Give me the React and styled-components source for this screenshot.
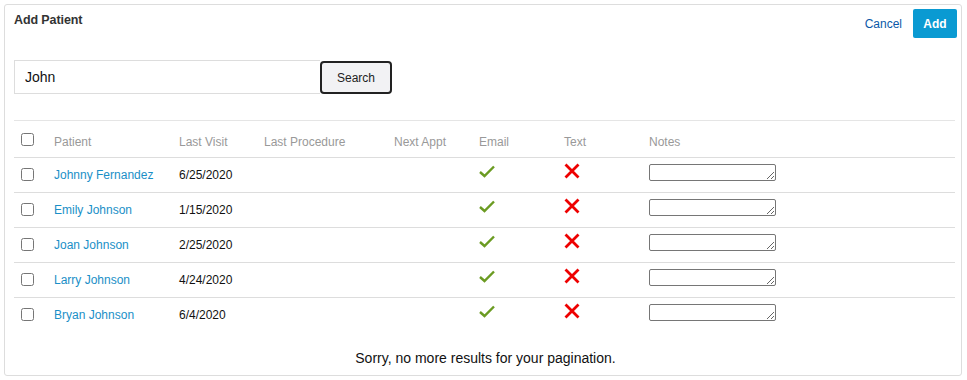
import styled, { createGlobalStyle } from 'styled-components';

const GlobalStyle = createGlobalStyle`
  html, body {
    margin: 0;
    padding: 0;
    background: #ffffff;
    font-family: "Liberation Sans", Arial, sans-serif;
  }
`;

const Page = styled.div`
  padding: 4px 5px 4px 4px;
`;

const Panel = styled.div`
  border: 1px solid #dddddd;
  border-radius: 3px;
  height: 372px;
  box-sizing: border-box;
  padding: 4px 4px 0 9px;
  display: flex;
  flex-direction: column;
`;

const Header = styled.div`
  display: flex;
  justify-content: space-between;
  align-items: flex-start;
`;

const Title = styled.h2`
  margin: 4px 0 0;
  font-size: 12.5px;
  font-weight: bold;
  color: #333333;
  letter-spacing: -0.1px;
`;

const Actions = styled.div`
  display: flex;
  align-items: center;
  gap: 11px;
`;

const CancelLink = styled.a`
  font-size: 12px;
  color: #0a58a8;
  cursor: pointer;
`;

const AddButton = styled.button`
  width: 44px;
  height: 29px;
  border: none;
  border-radius: 2px;
  background: #0a9ad2;
  color: #ffffff;
  font-family: inherit;
  font-size: 12px;
  font-weight: bold;
`;

const SearchRow = styled.div`
  display: flex;
  margin-top: 22px;
`;

const SearchInput = styled.input`
  width: 306px;
  height: 34px;
  box-sizing: border-box;
  border: 1px solid #dddddd;
  border-right: none;
  padding: 0 10px;
  font-family: inherit;
  font-size: 14px;
  color: #111111;
  outline: none;
`;

const SearchButton = styled.button`
  width: 72px;
  height: 33px;
  box-sizing: border-box;
  border: 2px solid #222222;
  border-radius: 4px;
  background: #f2f2f4;
  font-family: inherit;
  font-size: 12px;
  color: #222222;
  margin-top: 1px;
`;

const Table = styled.table`
  margin-top: 26px;
  width: 941px;
  border-collapse: collapse;
  table-layout: fixed;
  font-size: 12px;
`;

const HeadCell = styled.th`
  box-sizing: border-box;
  height: 37px;
  padding: 5px 0 0 7px;
  text-align: left;
  font-weight: normal;
  color: #999999;
  border-top: 1px solid #e5e5e5;
  border-bottom: 1px solid #dddddd;
  width: ${p => (p.$w ? `${p.$w}px` : 'auto')};
`;

const Row = styled.tr`
  & + & td {
    border-top: 1px solid #dddddd;
  }
`;

const Cell = styled.td`
  height: 34px;
  padding: 0 0 0 7px;
  color: #111111;
  vertical-align: middle;
`;

const Check = styled.input.attrs({ type: 'checkbox' })`
  margin: -1px 0 0;
  width: 13px;
  height: 13px;
  display: block;
`;

const HeadCheck = styled(Check)`
  margin-top: -5px;
`;

const NameLink = styled.a`
  color: #1a8fc7;
  cursor: pointer;
`;

const Notes = styled.textarea`
  display: block;
  width: 127px;
  height: 17px;
  box-sizing: border-box;
  border: 1px solid #767676;
  border-radius: 2px;
  padding: 0;
  margin-top: -6px;
  font-family: inherit;
  resize: both;
`;

const Footer = styled.div`
  margin-top: 18px;
  text-align: center;
  font-size: 14px;
  color: #111111;
`;

const IconBox = styled.div`
  width: 16px;
  height: 16px;
  margin-top: -8px;
  svg {
    display: block;
  }
`;

const CheckIcon = () => (
  <IconBox>
    <svg width="16" height="16" viewBox="0 0 16 16">
      <path d="M1 9 L5.5 13 L15 3.5" fill="none" stroke="#6b9b22" strokeWidth="2.4" />
    </svg>
  </IconBox>
);

const CrossIcon = () => (
  <IconBox>
    <svg width="16" height="16" viewBox="0 0 16 16">
      <path d="M1.5 1.5 L14.5 14.5 M14.5 1.5 L1.5 14.5" stroke="#ee0000" strokeWidth="2.8" />
    </svg>
  </IconBox>
);

const patients = [
  { name: 'Johnny Fernandez', visit: '6/25/2020' },
  { name: 'Emily Johnson', visit: '1/15/2020' },
  { name: 'Joan Johnson', visit: '2/25/2020' },
  { name: 'Larry Johnson', visit: '4/24/2020' },
  { name: 'Bryan Johnson', visit: '6/4/2020' },
];

export default function App() {
  return (
    <Page>
      <GlobalStyle />
      <Panel>
        <Header>
          <Title>Add Patient</Title>
          <Actions>
            <CancelLink>Cancel</CancelLink>
            <AddButton>Add</AddButton>
          </Actions>
        </Header>
        <SearchRow>
          <SearchInput defaultValue="John" />
          <SearchButton>Search</SearchButton>
        </SearchRow>
        <Table>
          <thead>
            <tr>
              <HeadCell $w={33}><HeadCheck /></HeadCell>
              <HeadCell $w={125}>Patient</HeadCell>
              <HeadCell $w={85}>Last Visit</HeadCell>
              <HeadCell $w={130}>Last Procedure</HeadCell>
              <HeadCell $w={85}>Next Appt</HeadCell>
              <HeadCell $w={85}>Email</HeadCell>
              <HeadCell $w={85}>Text</HeadCell>
              <HeadCell>Notes</HeadCell>
            </tr>
          </thead>
          <tbody>
            {patients.map(p => (
              <Row key={p.name}>
                <Cell><Check /></Cell>
                <Cell><NameLink>{p.name}</NameLink></Cell>
                <Cell>{p.visit}</Cell>
                <Cell />
                <Cell />
                <Cell><CheckIcon /></Cell>
                <Cell><CrossIcon /></Cell>
                <Cell><Notes /></Cell>
              </Row>
            ))}
          </tbody>
        </Table>
        <Footer>Sorry, no more results for your pagination.</Footer>
      </Panel>
    </Page>
  );
}
